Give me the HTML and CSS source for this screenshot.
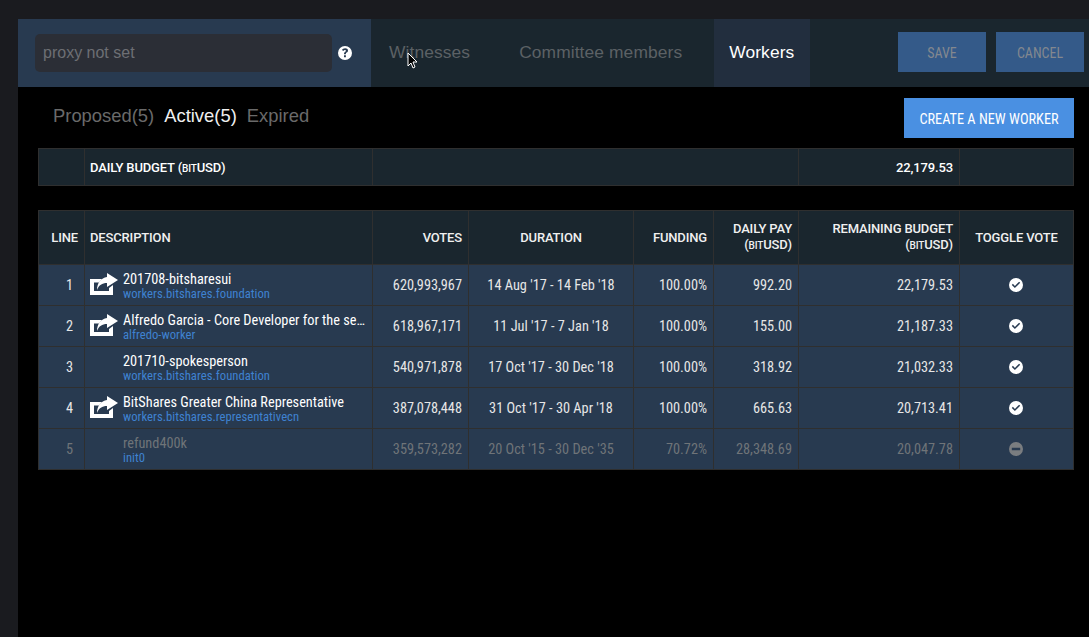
FILE: index.html
```html
<!DOCTYPE html>
<html lang="en">
<head>
    <meta charset="UTF-8">
    <title>Workers</title>
    <link rel="stylesheet" href="styles.css">
</head>
<body>
    <svg class="icon-defs" width="0" height="0">
        <symbol id="share" viewBox="0 0 28 22">
            <path d="M0 6h12L9 9.500H4V18h15v-3l4-3v10H0z"/>
            <path d="M17 0l11 7-11 7v-4c-5 0-8 2-10 7 0-7 4-12 10-13z"/>
        </symbol>
        <symbol id="check" viewBox="0 0 14 14">
            <path fill-rule="evenodd" d="M7 0a7 7 0 1 1 0 14A7 7 0 0 1 7 0zM3.900 5.800L2.800 6.900l3.100 3.200 5.300-5.300-1.100-1.100-4.200 4.200z"/>
        </symbol>
        <symbol id="minus" viewBox="0 0 14 14">
            <path fill-rule="evenodd" d="M7 0a7 7 0 1 1 0 14A7 7 0 0 1 7 0zM2.800 5.800v2.400h8.400V5.800z"/>
        </symbol>
    </svg>

    <main class="main">
        <header class="topbar">
            <div class="proxy">
                <input class="proxy-input" type="text" placeholder="proxy not set">
                <svg class="help" viewBox="0 0 14 14">
                    <path fill-rule="evenodd" d="M7 0a7 7 0 1 1 0 14A7 7 0 0 1 7 0zM6 8.200h1.900c0-1 .2-1.200.8-1.600.8-.5 1.300-1.100 1.300-2.100C10 3.100 8.800 2.300 7.100 2.300 5.600 2.300 4.600 3 4 4l1.300 1c.4-.6.9-1 1.600-1 .7 0 1.100.3 1.100.8 0 .4-.3.7-.8 1C6.400 6.300 6 6.900 6 8.200zM6 9.300v1.900h1.900V9.300z"/>
                </svg>
            </div>
            <nav class="tabs">
                <a class="tab">Witnesses</a>
                <a class="tab">Committee members</a>
                <a class="tab tab-active">Workers</a>
            </nav>
            <div class="actions">
                <button class="btn btn-off">SAVE</button>
                <button class="btn btn-off">CANCEL</button>
            </div>
        </header>

        <svg class="cursor" viewBox="0 0 12 18">
            <path d="M1 1v13l3-3 2 5 2-1-2-5h4z" fill="#000" stroke="#fff" stroke-width="1"/>
        </svg>

        <div class="subbar">
            <div class="subtabs">
                <a class="subtab">Proposed(5)</a>
                <a class="subtab subtab-active">Active(5)</a>
                <a class="subtab">Expired</a>
            </div>
            <button class="btn btn-create">CREATE A NEW WORKER</button>
        </div>

        <table class="grid budget">
            <colgroup>
                <col class="c-line"><col class="c-desc"><col class="c-mid"><col class="c-remain"><col class="c-toggle">
            </colgroup>
            <tr>
                <td></td>
                <td class="strong">DAILY BUDGET (<span class="small">BIT</span>USD)</td>
                <td></td>
                <td class="num strong">22,179.53</td>
                <td></td>
            </tr>
        </table>

        <table class="grid workers">
            <colgroup>
                <col class="c-line"><col class="c-desc"><col class="c-votes"><col class="c-dur"><col class="c-fund"><col class="c-pay"><col class="c-remain"><col class="c-toggle">
            </colgroup>
            <thead>
                <tr>
                    <th class="num">LINE</th>
                    <th>DESCRIPTION</th>
                    <th class="num">VOTES</th>
                    <th class="center">DURATION</th>
                    <th class="num">FUNDING</th>
                    <th class="num">DAILY PAY<br>(<span class="small">BIT</span>USD)</th>
                    <th class="num">REMAINING BUDGET<br>(<span class="small">BIT</span>USD)</th>
                    <th class="center">TOGGLE VOTE</th>
                </tr>
            </thead>
            <tbody>
                <tr>
                    <td class="line">1</td>
                    <td><div class="desc"><svg class="share"><use href="#share"/></svg><div class="desc-text"><div class="name">201708-bitsharesui</div><a class="link">workers.bitshares.foundation</a></div></div></td>
                    <td class="num">620,993,967</td>
                    <td class="center">14 Aug '17 - 14 Feb '18</td>
                    <td class="num">100.00%</td>
                    <td class="num">992.20</td>
                    <td class="num">22,179.53</td>
                    <td class="vote-cell"><svg class="vote"><use href="#check"/></svg></td>
                </tr>
                <tr>
                    <td class="line">2</td>
                    <td><div class="desc"><svg class="share"><use href="#share"/></svg><div class="desc-text"><div class="name">Alfredo Garcia - Core Developer for the se…</div><a class="link">alfredo-worker</a></div></div></td>
                    <td class="num">618,967,171</td>
                    <td class="center">11 Jul '17 - 7 Jan '18</td>
                    <td class="num">100.00%</td>
                    <td class="num">155.00</td>
                    <td class="num">21,187.33</td>
                    <td class="vote-cell"><svg class="vote"><use href="#check"/></svg></td>
                </tr>
                <tr>
                    <td class="line">3</td>
                    <td><div class="desc"><div class="share"></div><div class="desc-text"><div class="name">201710-spokesperson</div><a class="link">workers.bitshares.foundation</a></div></div></td>
                    <td class="num">540,971,878</td>
                    <td class="center">17 Oct '17 - 30 Dec '18</td>
                    <td class="num">100.00%</td>
                    <td class="num">318.92</td>
                    <td class="num">21,032.33</td>
                    <td class="vote-cell"><svg class="vote"><use href="#check"/></svg></td>
                </tr>
                <tr>
                    <td class="line">4</td>
                    <td><div class="desc"><svg class="share"><use href="#share"/></svg><div class="desc-text"><div class="name">BitShares Greater China Representative</div><a class="link">workers.bitshares.representativecn</a></div></div></td>
                    <td class="num">387,078,448</td>
                    <td class="center">31 Oct '17 - 30 Apr '18</td>
                    <td class="num">100.00%</td>
                    <td class="num">665.63</td>
                    <td class="num">20,713.41</td>
                    <td class="vote-cell"><svg class="vote"><use href="#check"/></svg></td>
                </tr>
                <tr class="inactive">
                    <td class="line">5</td>
                    <td><div class="desc"><div class="share"></div><div class="desc-text"><div class="name">refund400k</div><a class="link">init0</a></div></div></td>
                    <td class="num">359,573,282</td>
                    <td class="center">20 Oct '15 - 30 Dec '35</td>
                    <td class="num">70.72%</td>
                    <td class="num">28,348.69</td>
                    <td class="num">20,047.78</td>
                    <td class="vote-cell"><svg class="vote"><use href="#minus"/></svg></td>
                </tr>
            </tbody>
        </table>
    </main>
</body>
</html>
```

FILE: styles.css
```css
html, body {
    height: 100%;
}
body {
    margin: 0;
    padding: 19px 0 0 18px;
    box-sizing: border-box;
    background: #1a1b1f;
    overflow: hidden;
    font-family: "Liberation Sans", Arial, sans-serif;
}
.icon-defs {
    display: block;
}
.main {
    position: relative;
    height: 100%;
    background: #000;
}

/* top bar */
.topbar {
    display: flex;
    height: 68px;
    background: #1a262e;
}
.proxy {
    display: flex;
    align-items: center;
    width: 353px;
    box-sizing: border-box;
    padding: 0 0 0 17px;
    background: #283a50;
}
.proxy-input {
    width: 297px;
    height: 38px;
    box-sizing: border-box;
    padding: 0 8px;
    border: none;
    border-radius: 5px;
    background: #2b2e36;
    font: 16px "Liberation Sans", Arial, sans-serif;
    color: #fff;
}
.proxy-input::placeholder {
    color: #6d6f74;
    opacity: 1;
}
.help {
    width: 14px;
    height: 14px;
    margin-left: 6px;
    fill: #fff;
}
.tabs {
    display: flex;
    flex: 1;
    gap: 17px;
    padding-left: 2px;
}
.tab {
    display: flex;
    align-items: center;
    padding: 0 16px 2px;
    font-size: 17.4px;
    letter-spacing: 0.1px;
    color: #5c6165;
}
.tab-active {
    margin-left: -1px;
    padding: 0 16px 2px 15px;
    background: #222e3e;
    color: #fff;
}
.actions {
    display: flex;
    align-items: center;
    gap: 10px;
    padding: 0 5px 2px 0;
}
.btn {
    height: 40px;
    padding: 1px 0 0;
    border: none;
    border-radius: 0;
    font: 14px Roboto, "Liberation Sans", sans-serif;
    font-stretch: condensed;
}
.btn-off {
    width: 88px;
    background: #345a89;
    color: #83888f;
}
.btn-create {
    width: 170px;
    background: #4a90e2;
    font-size: 14.3px;
    color: #fff;
}
.cursor {
    position: absolute;
    left: 389px;
    top: 33px;
    width: 12px;
    height: 18px;
}

/* proposed / active / expired */
.subbar {
    display: flex;
    justify-content: space-between;
    align-items: center;
    height: 40px;
    margin: 11px 15px 10px 0;
    padding-left: 35px;
}
.subtabs {
    display: flex;
    gap: 10px;
    margin-top: -4px;
}
.subtab {
    font-size: 18.4px;
    color: #6a6a6a;
}
.subtab-active {
    color: #f0f0f0;
}

/* tables */
.grid {
    width: 1035px;
    margin-left: 20px;
    table-layout: fixed;
    border-collapse: collapse;
    font: 14.3px Roboto, "Liberation Sans", sans-serif;
    font-stretch: condensed;
    color: #e6e6e6;
}
.grid td, .grid th {
    padding: 0 5px;
    border: 1px solid #2f2f2f;
    background: #1a262e;
    text-align: left;
    white-space: nowrap;
}
.grid th {
    font-size: 13px;
    font-stretch: normal;
    font-weight: 500;
    line-height: 16px;
    color: #f0f0f0;
    letter-spacing: -0.15px;
}
.grid .center {
    text-align: center;
}
.grid .num {
    padding-right: 6px;
    text-align: right;
}
.workers tbody td {
    background: #283a50;
}
.budget {
    margin-bottom: 24px;
}
.budget td {
    height: 36px;
}
.strong {
    font-size: 13px;
    font-stretch: normal;
    font-weight: 500;
    letter-spacing: -0.15px;
    color: #fff;
}
.small {
    font-size: 10px;
}
.c-line { width: 46px; }
.c-desc { width: 288px; }
.c-mid { width: 426px; }
.c-votes { width: 96px; }
.c-dur { width: 165px; }
.c-fund { width: 80px; }
.c-pay { width: 85px; }
.c-remain { width: 161px; }
.c-toggle { width: 114px; }
.workers thead th {
    height: 53px;
}
.workers tbody td {
    height: 40px;
}
.grid .line {
    text-align: right;
    padding-right: 11px;
}
.desc {
    display: flex;
    align-items: center;
    gap: 5px;
}
.share {
    flex: none;
    width: 28px;
    height: 22px;
    margin-top: -2px;
    fill: #fff;
}
.desc-text {
    min-width: 0;
    flex: 1;
    padding-top: 3px;
}
.name {
    line-height: 15px;
    color: #fff;
}
.link {
    display: block;
    font-size: 12.7px;
    line-height: 14px;
    color: #3f82d1;
}
.grid .vote-cell {
    padding: 0 6px 0 4px;
}
.vote {
    display: block;
    width: 14px;
    height: 14px;
    margin: 0 auto;
    fill: #fff;
}
.inactive td, .inactive .name {
    color: #6f7478;
}
.inactive .vote {
    fill: #7a7d80;
}
```
